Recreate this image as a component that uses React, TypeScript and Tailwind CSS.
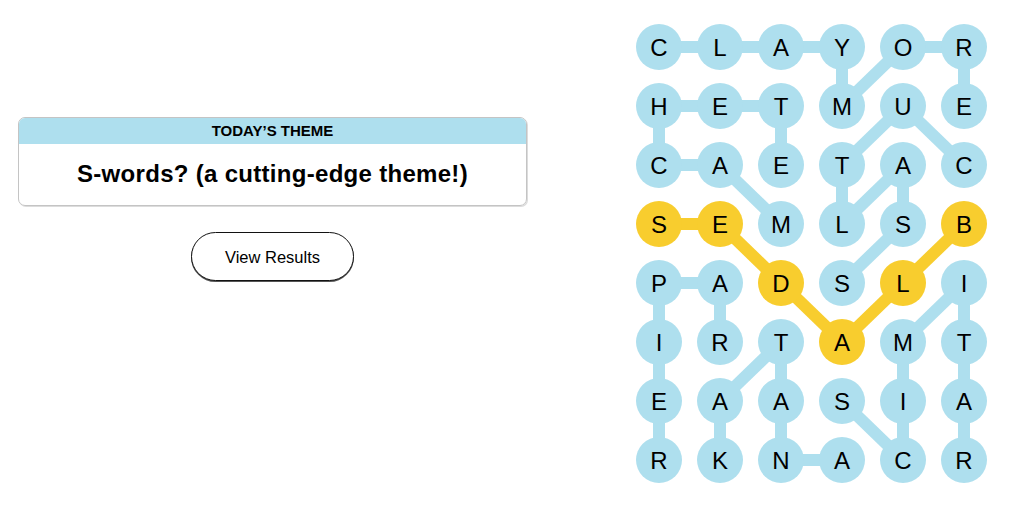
const LETTERS = [
  "CLAYOR",
  "HETMUE",
  "CAETAC",
  "SEMLSB",
  "PADSLI",
  "IRTAMT",
  "EAASIA",
  "RKNACR",
];

const SPANGRAM = ["3-0", "3-1", "4-2", "5-3", "4-4", "3-5"];

type Link = [number, number, number, number];

const BLUE_LINKS: Link[] = [
  [0, 0, 0, 1], [0, 1, 0, 2], [0, 2, 0, 3], [0, 3, 1, 3], [1, 3, 0, 4], [0, 4, 0, 5], [0, 5, 1, 5],
  [1, 0, 1, 1], [1, 1, 1, 2], [1, 0, 2, 0], [1, 2, 2, 2],
  [2, 0, 2, 1], [2, 1, 3, 2],
  [1, 4, 2, 3], [1, 4, 2, 5], [2, 3, 3, 3], [3, 3, 2, 4], [2, 4, 3, 4], [3, 4, 4, 3],
  [4, 0, 4, 1], [4, 0, 5, 0], [5, 0, 6, 0], [6, 0, 7, 0], [4, 1, 5, 1],
  [4, 5, 5, 4], [4, 5, 5, 5], [5, 5, 6, 5], [6, 5, 7, 5], [5, 4, 6, 4], [6, 4, 7, 4], [6, 3, 7, 4],
  [5, 2, 6, 1], [5, 2, 6, 2], [6, 2, 7, 2], [7, 2, 7, 3], [6, 1, 7, 1],
];

const YELLOW_LINKS: Link[] = [
  [3, 0, 3, 1], [3, 1, 4, 2], [4, 2, 5, 3], [5, 3, 4, 4], [4, 4, 3, 5],
];

// circle 46px, col step 61, row step 59
const cx = (c: number) => 23 + c * 61;
const cy = (r: number) => 23 + r * 59;

function Links({ links, color }: { links: Link[]; color: string }) {
  return (
    <>
      {links.map(([r1, c1, r2, c2], i) => (
        <line
          key={i}
          x1={cx(c1)}
          y1={cy(r1)}
          x2={cx(c2)}
          y2={cy(r2)}
          stroke={color}
          strokeWidth={12}
        />
      ))}
    </>
  );
}

function Board() {
  return (
    <div className="relative">
      <svg className="absolute left-0 top-0" width={351} height={459}>
        <Links links={BLUE_LINKS} color="#aedfee" />
        <Links links={YELLOW_LINKS} color="#f8cd2e" />
      </svg>
      <div className="relative grid grid-cols-[repeat(6,46px)] grid-rows-[repeat(8,46px)] gap-x-[15px] gap-y-[13px]">
        {LETTERS.map((row, r) =>
          row.split("").map((ch, c) => {
            const hit = SPANGRAM.includes(`${r}-${c}`);
            return (
              <div
                key={`${r}-${c}`}
                className={`flex h-[46px] w-[46px] items-center justify-center rounded-full pt-[2px] text-[24px] leading-none text-black ${
                  hit ? "bg-[#f8cd2e]" : "bg-[#aedfee]"
                }`}
              >
                {ch}
              </div>
            );
          })
        )}
      </div>
    </div>
  );
}

export default function App() {
  return (
    <div className="flex h-[516px] w-full items-start bg-white pl-[18px] font-['Liberation_Sans',Arial,sans-serif] text-black">
      <div className="mt-[117px] flex w-[509px] flex-col items-center">
        <section className="w-full overflow-hidden rounded-[7px] border border-[#c4c4c4] shadow-[1px_1px_0_#dcdcdc]">
          <div className="flex h-[26px] items-center justify-center bg-[#aedfee] pt-px text-[15px] font-bold uppercase">
            Today’s Theme
          </div>
          <div className="flex h-[61px] items-center justify-center pb-[2px] text-[24px] font-bold tracking-[0.3px]">
            S-words? (a cutting-edge theme!)
          </div>
        </section>

        <button className="mt-[26px] h-[49px] w-[163px] rounded-full border border-[#121212] bg-white pt-[2px] text-[16.5px] shadow-[0_1px_0_#555]">
          View Results
        </button>
      </div>

      <div className="ml-[109px] mt-[24px]">
        <Board />
      </div>
    </div>
  );
}
